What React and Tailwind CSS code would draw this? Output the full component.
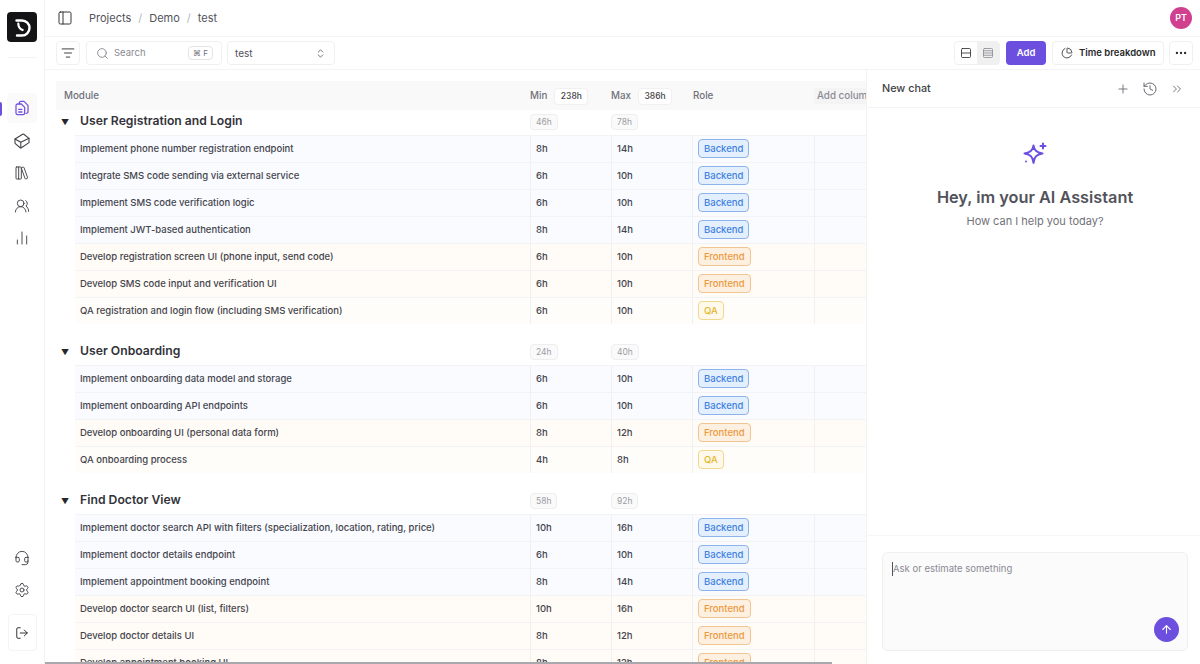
import React from 'react';
import {
  PanelLeft, Search, ChevronsUpDown, LibraryBig, UsersRound, ChartNoAxesColumn, Headset, Settings, LogOut,
  ListFilter, Rows2, Rows4, ChartPie, Ellipsis, Plus, History, ChevronsRight, ArrowUp,
} from 'lucide-react';

const groups = [
  {
    name: 'User Registration and Login', min: '46h', max: '78h',
    rows: [
      ['Implement phone number registration endpoint', '8h', '14h', 'Backend'],
      ['Integrate SMS code sending via external service', '6h', '10h', 'Backend'],
      ['Implement SMS code verification logic', '6h', '10h', 'Backend'],
      ['Implement JWT-based authentication', '8h', '14h', 'Backend'],
      ['Develop registration screen UI (phone input, send code)', '6h', '10h', 'Frontend'],
      ['Develop SMS code input and verification UI', '6h', '10h', 'Frontend'],
      ['QA registration and login flow (including SMS verification)', '6h', '10h', 'QA'],
    ],
  },
  {
    name: 'User Onboarding', min: '24h', max: '40h',
    rows: [
      ['Implement onboarding data model and storage', '6h', '10h', 'Backend'],
      ['Implement onboarding API endpoints', '6h', '10h', 'Backend'],
      ['Develop onboarding UI (personal data form)', '8h', '12h', 'Frontend'],
      ['QA onboarding process', '4h', '8h', 'QA'],
    ],
  },
  {
    name: 'Find Doctor View', min: '58h', max: '92h',
    rows: [
      ['Implement doctor search API with filters (specialization, location, rating, price)', '10h', '16h', 'Backend'],
      ['Implement doctor details endpoint', '6h', '10h', 'Backend'],
      ['Implement appointment booking endpoint', '8h', '14h', 'Backend'],
      ['Develop doctor search UI (list, filters)', '10h', '16h', 'Frontend'],
      ['Develop doctor details UI', '8h', '12h', 'Frontend'],
      ['Develop appointment booking UI', '8h', '12h', 'Frontend'],
    ],
  },
];

const rowBg = {
  Backend: 'bg-[#f9fbff]',
  Frontend: 'bg-[#fffbf6]',
  QA: 'bg-[#fffdf9]',
};

const roleStyle = {
  Backend: 'bg-[#e3effd] border-[#8db4ea] text-[#3f82e0]',
  Frontend: 'bg-[#fdf0e0] border-[#f0c594] text-[#ec9a3f]',
  QA: 'bg-[#fef9ea] border-[#f0d98e] text-[#e2b52c]',
};

function SideIcon({ icon: Icon, active }) {
  return (
    <div className={`w-[30px] h-[30px] flex items-center justify-center rounded ${active ? 'bg-[#fafafa] text-[#7152e0]' : 'text-[#3f3f46]'}`}>
      <Icon className="w-[16px] h-[16px]" strokeWidth={1.4} />
    </div>
  );
}

function Logo() {
  return (
    <div className="mt-3 w-[30px] h-[30px] rounded bg-[#141416]">
      <svg className="w-[30px] h-[30px]" viewBox="0 0 30 30" fill="none" stroke="white" strokeLinecap="round">
        <path d="M9.500 8.500h5.500a7.500 7.500 0 0 1 0 15h-5" strokeWidth="2.400" />
        <path d="M11.300 11.500c0 3 1.500 5.500 4.400 6.500" strokeWidth="2.200" />
      </svg>
    </div>
  );
}

function TiltedBox({ className, strokeWidth }) {
  return (
    <svg className={className} viewBox="0 0 24 24" fill="none" stroke="currentColor" strokeWidth={strokeWidth + 0.2} strokeLinecap="round" strokeLinejoin="round">
      <path d="M1.500 9 13 1.800a1.500 1.500 0 0 1 1.700.1L22.500 8v6.500L11 22.200a1.500 1.500 0 0 1-1.700-.1L1.500 15.500Z" />
      <path d="M1.500 9l8.700 5 12.300-6M10.200 14v8" />
    </svg>
  );
}

function FilesIcon({ className, strokeWidth }) {
  return (
    <svg className={className} viewBox="0 0 24 24" fill="none" stroke="currentColor" strokeWidth={strokeWidth + 0.5} strokeLinecap="round" strokeLinejoin="round">
      <path d="M8 6V4.500A2.500 2.500 0 0 1 10.500 2H15l6 6v9.500a2.500 2.500 0 0 1-2.500 2.500H18" />
      <path d="M5.500 6H11l5 5v8.500a2.500 2.500 0 0 1-2.500 2.500h-8A2.500 2.500 0 0 1 3 19.500v-11A2.500 2.500 0 0 1 5.500 6Z" />
      <path d="M7 14h5M7 18h5" />
    </svg>
  );
}

function Sidebar() {
  return (
    <aside className="w-[45px] shrink-0 h-full border-r border-[#f2f2f3] flex flex-col items-center relative">
      <Logo />
      <div className="mt-[15px] w-[30px] border-t border-[#f4f4f5]" />
      <div className="mt-[35px] flex flex-col items-center gap-[2.5px]">
        <SideIcon icon={FilesIcon} active />
        <SideIcon icon={TiltedBox} />
        <SideIcon icon={LibraryBig} />
        <SideIcon icon={UsersRound} />
        <SideIcon icon={ChartNoAxesColumn} />
      </div>
      <div className="mt-auto mb-[13px] flex flex-col items-center gap-[2px]">
        <SideIcon icon={Headset} />
        <SideIcon icon={Settings} />
        <div className="mt-[7px] w-[29px] h-[37px] border border-[#f4f4f5] rounded flex items-center justify-center text-[#27272a]">
          <LogOut className="w-[14px] h-[14px]" strokeWidth={1.6} />
        </div>
      </div>
      <span className="absolute left-0 top-[102px] w-[2px] h-[14px] bg-[#6d4fe0] rounded-r" />
    </aside>
  );
}

function TopBar() {
  return (
    <div className="h-[37px] shrink-0 border-b border-[#f4f4f5] flex items-center pl-[12px] pr-[8px]">
      <PanelLeft className="w-[16px] h-[16px] text-[#27272a]" strokeWidth={1.4} />
      <div className="ml-[16px] flex items-center text-[11px] text-[#52525b]">
        <span>Projects</span>
        <span className="mx-[7px] text-[#b4b4bb]">/</span>
        <span>Demo</span>
        <span className="mx-[7px] text-[#b4b4bb]">/</span>
        <span>test</span>
      </div>
      <div className="ml-auto w-[22px] h-[22px] rounded-full bg-[#d1408f] text-white text-[9px] font-semibold flex items-center justify-center">PT</div>
    </div>
  );
}

function Toolbar() {
  return (
    <div className="h-[33px] shrink-0 border-b border-[#f4f4f5] flex items-center pl-[11px] pr-[7px]">
      <div className="w-[24px] h-[24px] border border-[#f0f0f1] rounded flex items-center justify-center text-[#27272a]">
        <ListFilter className="w-[14px] h-[14px]" strokeWidth={1.5} />
      </div>
      <div className="ml-[6px] w-[136px] h-[24px] border border-[#f0f0f1] rounded flex items-center pl-[9px] pr-[8px]">
        <Search className="w-[13px] h-[13px] text-[#71717a]" strokeWidth={1.4} />
        <span className="ml-[5px] text-[9.500px] text-[#8a8a93]">Search</span>
        <span className="ml-auto h-[14px] px-[4px] border border-[#e4e4e7] rounded-sm text-[8px] leading-[12px] text-[#71717a]">⌘ F</span>
      </div>
      <div className="ml-[5px] w-[108px] h-[24px] border border-[#f0f0f1] rounded flex items-center pl-[7px] pr-[8px] text-[10px] text-[#52525b]">
        test
        <ChevronsUpDown className="ml-auto w-[11px] h-[11px] text-[#3f3f46]" strokeWidth={1.6} />
      </div>
      <div className="ml-auto flex items-center">
        <div className="w-[46px] h-[24px] border border-[#f0f0f1] rounded flex overflow-hidden">
          <div className="w-[23px] flex items-center justify-center text-[#27272a]">
            <Rows2 className="w-[12px] h-[12px]" strokeWidth={1.6} />
          </div>
          <div className="w-[23px] bg-[#f0f0f1] flex items-center justify-center text-[#8a8a93]">
            <Rows4 className="w-[12px] h-[12px]" strokeWidth={1.6} />
          </div>
        </div>
        <button className="ml-[6px] w-[40px] h-[24px] rounded-sm bg-[#6d4fe0] text-white text-[9.500px] font-semibold">Add</button>
        <div className="ml-[6px] w-[112px] h-[24px] border border-[#f0f0f1] rounded flex items-center pl-[8px] text-[9.500px] font-semibold text-[#27272a] whitespace-nowrap">
          <ChartPie className="w-[12px] h-[12px] mr-[6px]" strokeWidth={1.6} />
          Time breakdown
        </div>
        <div className="ml-[5px] w-[24px] h-[24px] border border-[#f0f0f1] rounded flex items-center justify-center text-[#27272a]">
          <Ellipsis className="w-[14px] h-[14px]" strokeWidth={2} />
        </div>
      </div>
    </div>
  );
}

function Group({ group }) {
  return (
    <div className="mb-[16px]">
      <div className="h-[25px] flex pb-[2px]">
        <div className="w-[474px] flex items-center">
          <span className="ml-[5px] text-[8px] text-[#27272a]">▼</span>
          <span className="ml-[11px] text-[12.200px] font-semibold text-[#33333a]">{group.name}</span>
        </div>
        <div className="w-[81px] flex items-center">
          <span className="h-[16px] px-[5px] bg-[#fafafa] border border-[#eeeeef] rounded-sm text-[8.500px] leading-[14px] text-[#9a9aa2]">{group.min}</span>
        </div>
        <div className="w-[81px] flex items-center">
          <span className="h-[16px] px-[5px] bg-[#fafafa] border border-[#eeeeef] rounded-sm text-[8.500px] leading-[14px] text-[#9a9aa2]">{group.max}</span>
        </div>
      </div>
      {group.rows.map((row) => (
        <div key={row[0]} className={`ml-[19px] h-[27px] flex border-t border-[#f3f3f5] ${rowBg[row[3]]}`}>
          <div className="w-[455px] pl-[5px] flex items-center text-[9.500px] text-[#45454d] font-medium whitespace-nowrap">{row[0]}</div>
          <div className="w-[81px] pl-[5px] flex items-center text-[9.500px] text-[#45454d] font-medium border-l border-[#f0f0f2]">{row[1]}</div>
          <div className="w-[81px] pl-[5px] flex items-center text-[9.500px] text-[#45454d] font-medium border-l border-[#f0f0f2]">{row[2]}</div>
          <div className="w-[122px] pl-[5px] pb-[1px] flex items-center border-l border-[#f0f0f2]">
            <span className={`h-[19px] px-[5px] rounded-sm border text-[9.500px] leading-[17px] font-medium ${roleStyle[row[3]]}`}>{row[3]}</span>
          </div>
          <div className="w-[60px] border-l border-[#f0f0f2]" />
        </div>
      ))}
    </div>
  );
}

function Table() {
  return (
    <div className="flex-1 min-w-0 overflow-hidden pl-[11px] pt-[11px]">
      <div className="w-[820px]">
        <div className="h-[29px] pt-[1px] bg-[#f9f9fa] flex items-center text-[9.800px] font-medium text-[#71717a] whitespace-nowrap">
          <div className="w-[474px] pl-[8px]">Module</div>
          <div className="w-[81px] flex items-center">
            Min
            <span className="ml-[7px] h-[17px] px-[5.500px] bg-white border border-[#f0f0f1] rounded-sm text-[8.500px] leading-[15px] text-[#3f3f46]">238h</span>
          </div>
          <div className="w-[81px] flex items-center">
            Max
            <span className="ml-[7px] h-[17px] px-[5.500px] bg-white border border-[#f0f0f1] rounded-sm text-[8.500px] leading-[15px] text-[#3f3f46]">386h</span>
          </div>
          <div className="w-[122px] pl-[1px]">Role</div>
          <div className="pl-[3px] text-[#8a8a93] bg-[#f4f4f5] leading-[16px] w-[60px]">Add column</div>
        </div>
        {groups.map((g) => <Group key={g.name} group={g} />)}
      </div>
    </div>
  );
}

function ChatPanel() {
  return (
    <div className="w-[334px] shrink-0 border-l border-[#f2f2f3] flex flex-col bg-white">
      <div className="h-[38px] shrink-0 border-b border-[#f4f4f5] flex items-center pl-[15px] pr-[16px] pt-[1px] text-[#5f5f68]">
        <span className="text-[10.800px] font-medium text-[#3f3f46]">New chat</span>
        <Plus className="ml-auto w-[14px] h-[14px]" strokeWidth={1.4} />
        <History className="ml-[12.500px] w-[16px] h-[16px]" strokeWidth={1.4} />
        <ChevronsRight className="ml-[12px] w-[14px] h-[14px]" strokeWidth={1.4} />
      </div>
      <div className="flex-1 flex flex-col items-center pl-[3px]">
        <svg className="mt-[34px] w-[24px] h-[24px] text-[#6d4fe0]" viewBox="0 0 24 24" fill="none" stroke="currentColor" strokeWidth="2" strokeLinecap="round" strokeLinejoin="round">
          <path d="M10.500 3.500c.7 4.700 2.700 6.800 9 8-6.300 1.200-8.300 3.300-9 9.500-.7-6.200-2.700-8.300-9-9.500 6.300-1.200 8.300-3.300 9-8Z" />
          <path d="M20 1.500v5M17.500 4h5" />
          <path d="M3 19.500h.01" />
        </svg>
        <div className="mt-[20px] text-[16.300px] leading-[22px] font-semibold text-[#52525b]">Hey, im your AI Assistant</div>
        <div className="mt-[5px] text-[11px] text-[#71717a]">How can I help you today?</div>
      </div>
      <div className="h-[129px] shrink-0 border-t border-[#f6f6f7] pl-[15px] pr-[12px] pt-[16px]">
        <div className="h-[99px] bg-[#fbfbfb] border border-[#efeff0] rounded-md pl-[9px] pr-[8px] pt-[9px] flex flex-col">
          <div className="text-[9.500px] leading-[14px] text-[#8a8a93] border-l border-[#52525b] w-fit">Ask or estimate something</div>
          <div className="mt-auto mb-[8px] ml-auto w-[25px] h-[25px] rounded-full bg-[#6d4fe0] flex items-center justify-center text-white">
            <ArrowUp className="w-[13px] h-[13px]" strokeWidth={2} />
          </div>
        </div>
      </div>
    </div>
  );
}

export default function App() {
  return (
    <div className="w-[1200px] h-[664px] flex overflow-hidden bg-white relative" style={{ fontFamily: 'Inter, "Liberation Sans", sans-serif' }}>
      <Sidebar />
      <div className="flex-1 min-w-0 flex flex-col">
        <TopBar />
        <Toolbar />
        <div className="flex-1 min-h-0 flex">
          <Table />
          <ChatPanel />
        </div>
      </div>
      <div className="absolute left-[45px] bottom-0 w-[787px] h-[2px] bg-[#a9a9ad]" />
    </div>
  );
}
